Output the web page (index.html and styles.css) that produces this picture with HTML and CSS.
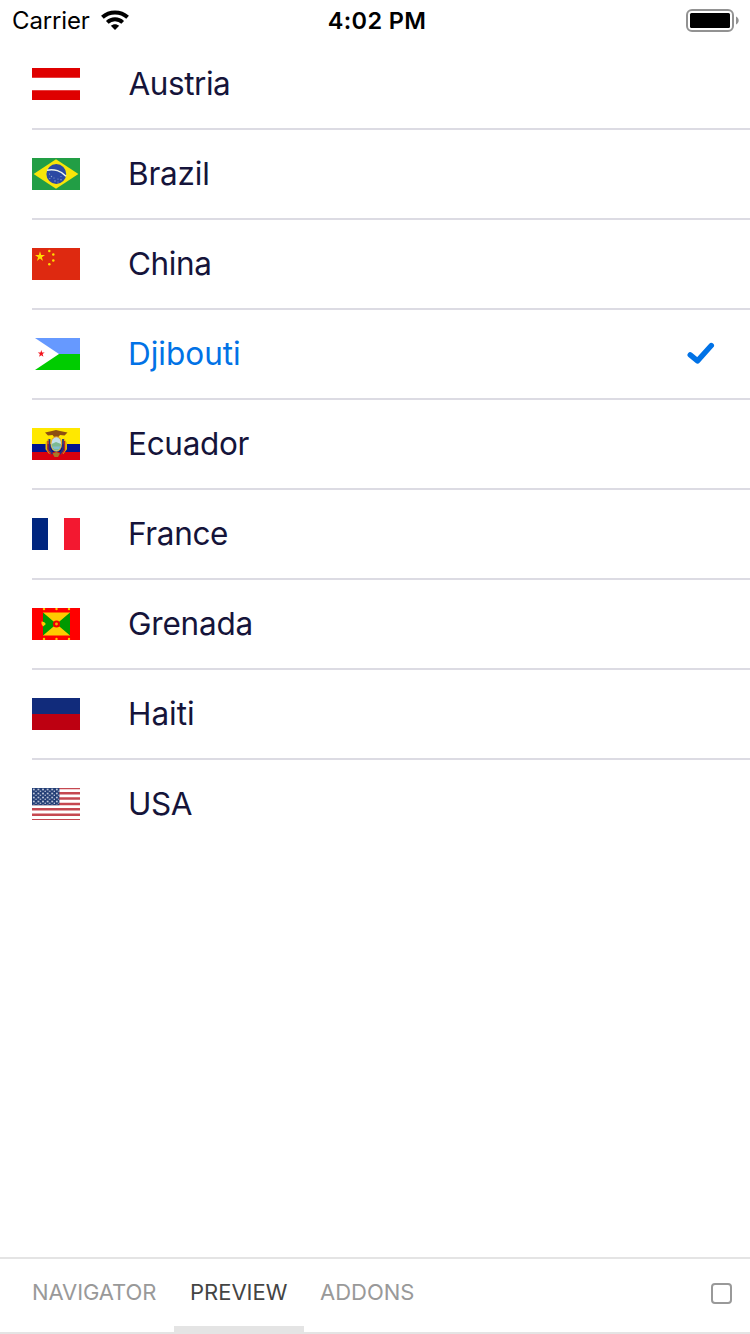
FILE: index.html
```html
<!DOCTYPE html>
<html lang="en">
<head>
<meta charset="utf-8">
<title>Countries</title>
<link rel="stylesheet" href="styles.css">
</head>
<body>
<div class="screen">
  <header class="status">
    <div class="status-left">
      <span class="carrier">Carrier</span>
      <svg class="wifi" width="28" height="20" viewBox="0 0 28 20">
        <path d="M1.400 7.200C8.500.8 19.500.8 26.600 7.200" fill="none" stroke="#000" stroke-width="4"/>
        <path d="M6.300 12.300C10.600 8.200 17.400 8.200 21.700 12.300" fill="none" stroke="#000" stroke-width="3.900"/>
        <path d="M14 20L9.800 15.800C12.200 13.600 15.800 13.600 18.200 15.800Z"/>
      </svg>
    </div>
    <span class="time">4:02 PM</span>
    <div class="status-right">
      <svg class="battery" width="54" height="24" viewBox="0 0 54 24">
        <rect x="1" y="1" width="46" height="21" rx="5" fill="#fff" stroke="#929292" stroke-width="2"/>
        <rect x="4" y="4" width="40" height="15" rx="1.500"/>
        <path d="M50 7.500C53.600 9 53.600 14 50 15.500Z" fill="#929292"/>
      </svg>
    </div>
  </header>

  <ul class="list">
    <li class="row">
      <svg class="flag" viewBox="0 0 48 32"><path fill="#fff" d="M0 0H48V32H0Z"/><path fill="#df0000" d="M0 0H48V9.700H0ZM0 22.300H48V32H0Z"/></svg>
      <div class="cell"><span class="name austria">Austria</span></div>
    </li>
    <li class="row">
      <svg class="flag" viewBox="0 0 48 32"><path fill="#229e45" d="M0 0H48V32H0Z"/><path fill="#f8e509" d="M1.600 16L24 1.300L46.400 16L24 30.700Z"/><circle cx="24.300" cy="16" r="9.900" fill="#2b49a3"/><path d="M15 12.200C22 10.600 29.500 13 34 18.200" fill="none" stroke="#eff5e8" stroke-width="1.500"/><g fill="#8fa5cc"><circle cx="17.500" cy="16" r=".6"/><circle cx="19.500" cy="18.500" r=".7"/><circle cx="17.800" cy="20.500" r=".6"/><circle cx="22" cy="20" r=".6"/><circle cx="23" cy="23" r=".7"/><circle cx="26" cy="21" r=".6"/><circle cx="29" cy="21.800" r=".7"/><circle cx="26" cy="24" r=".5"/><circle cx="29" cy="18.500" r=".5"/></g></svg>
      <div class="cell"><span class="name brazil">Brazil</span></div>
    </li>
    <li class="row">
      <svg class="flag" viewBox="0 0 48 32"><path fill="#de2910" d="M0 0H48V32H0Z"/><g fill="#ffde00"><path d="M8 3.200L9.200 6.900H13L9.900 9.200L11 12.900L8 10.600L4.900 12.900L6.100 9.200L3 6.900H6.800Z"/><circle cx="17.300" cy="3" r="1.250"/><circle cx="21.300" cy="6.500" r="1.250"/><circle cx="21.300" cy="12.500" r="1.250"/><circle cx="17.300" cy="16.200" r="1.250"/></g></svg>
      <div class="cell"><span class="name china">China</span></div>
    </li>
    <li class="row selected">
      <svg class="flag" viewBox="0 0 48 32"><path fill="#fff" d="M0 0H48V32H0Z"/><path fill="#6699ff" d="M3 0H48V16H27Z"/><path fill="#00cc00" d="M27 16H48V32H3Z"/><path fill="#f2121c" d="M9.300 12L10.100 14.500H12.700L10.600 16.100L11.400 18.800L9.300 17.200L7.100 18.800L7.900 16.100L5.800 14.500H8.500Z"/></svg>
      <div class="cell"><span class="name djibouti">Djibouti</span>
        <svg class="check" width="28" height="24" viewBox="0 0 28 24"><path d="M3.200 12.900L10.500 18.900L24.300 3.500" fill="none" stroke="#0172e6" stroke-width="5.400" stroke-linecap="round" stroke-linejoin="round"/></svg>
      </div>
    </li>
    <li class="row">
      <svg class="flag" viewBox="0 0 48 32">
        <path fill="#ffe800" d="M0 0H48V16H0Z"/><path fill="#00148e" d="M0 16H48V24H0Z"/><path fill="#d8000e" d="M0 24H48V32H0Z"/>
        <path d="M17 11L14.500 15V21L18 25.500M31.500 11L34 15V21L30.500 25.500" fill="none" stroke="#e6b800" stroke-width="2"/>
        <path d="M17.500 11V21L20.500 26M31 11V21L28 26" fill="none" stroke="#26337c" stroke-width="1.800"/>
        <path d="M16 13V22L19 26.500M32.500 13V22L29.500 26.500" fill="none" stroke="#b9202a" stroke-width="1.300"/>
        <path d="M13 4.500L20 3L24 2L28 3L35.500 4.500L32.500 7.500L28 7L26 9.500H22.500L20.500 7L16 7.500Z" fill="#8c4f12"/>
        <ellipse cx="24.300" cy="16" rx="5.800" ry="7.800" fill="#e0a32d"/>
        <ellipse cx="24.300" cy="16" rx="4.900" ry="6.700" fill="#c3e0ea"/>
        <path d="M19.700 16L24 14L29 16C29 20 27 22.600 24.300 22.600S19.700 20 19.700 16Z" fill="#7cba91"/>
        <path d="M20.300 18.500H28.200L27 21H22Z" fill="#82bfd0"/>
        <path d="M20.500 25.500L24.300 24L28 25.500L26 29H22.500Z" fill="#a77827"/>
      </svg>
      <div class="cell"><span class="name ecuador">Ecuador</span></div>
    </li>
    <li class="row">
      <svg class="flag" viewBox="0 0 48 32"><path fill="#fff" d="M0 0H48V32H0Z"/><path fill="#00267f" d="M0 0H16V32H0Z"/><path fill="#f31830" d="M32 0H48V32H32Z"/></svg>
      <div class="cell"><span class="name france">France</span></div>
    </li>
    <li class="row">
      <svg class="flag" viewBox="0 0 48 32"><path fill="#ff0000" d="M0 0H48V32H0Z"/><path fill="#ffcc00" d="M11 4.500H38V27.500H11Z"/><path fill="#009900" d="M11 4.500L24.500 16L11 27.500ZM38 4.500L24.500 16L38 27.500Z"/><circle cx="24.500" cy="16" r="3.600" fill="#f00000"/><circle cx="24.500" cy="16" r="1.400" fill="#f2b300"/><path d="M9.500 13.500C11 13.500 14 14.500 13.500 16.500L11 18.500L9.500 16Z" fill="#ffcc00"/><g fill="#ffcc00"><circle cx="12" cy="1" r="1.200"/><circle cx="24.500" cy="1" r="1.200"/><circle cx="37" cy="1" r="1.200"/><circle cx="12" cy="31" r="1.200"/><circle cx="24.500" cy="31" r="1.200"/><circle cx="37" cy="31" r="1.200"/></g></svg>
      <div class="cell"><span class="name grenada">Grenada</span></div>
    </li>
    <li class="row">
      <svg class="flag" viewBox="0 0 48 32"><path fill="#112b7b" d="M0 0H48V16H0Z"/><path fill="#bd0011" d="M0 16H48V32H0Z"/></svg>
      <div class="cell"><span class="name haiti">Haiti</span></div>
    </li>
    <li class="row">
      <svg class="flag" viewBox="0 0 48 32">
        <defs><pattern id="stars" width="4.600" height="4" patternUnits="userSpaceOnUse"><circle cx="1.800" cy="1.500" r=".95" fill="#c4cbdc"/><circle cx="4" cy="3.300" r=".75" fill="#c4cbdc"/></pattern></defs>
        <path fill="#fff" d="M0 0H48V32H0Z"/>
        <path fill="#c54851" d="M0 0H48V1.300H0ZM0 4H48V6.500H0ZM0 9.300H48V11.700H0ZM0 14.700H48V17.200H0ZM0 20H48V22.500H0ZM0 25.400H48V27.900H0ZM0 31H48V32H0Z"/>
        <path fill="#233e75" d="M0 0H27.400V17.200H0Z"/><path fill="url(#stars)" d="M0 0H27V17H0Z"/>
      </svg>
      <div class="cell"><span class="name usa">USA</span></div>
    </li>
  </ul>

  <nav class="tabs">
    <div class="tab"><span class="label navigator">NAVIGATOR</span></div>
    <div class="tab active"><span class="label preview">PREVIEW</span></div>
    <div class="tab"><span class="label addons">ADDONS</span></div>
    <span class="square"></span>
  </nav>
</div>
</body>
</html>
```
FILE: styles.css
```css
* { box-sizing: border-box; }
body {
  margin: 0;
  background: #fff;
  font-family: Inter, "Liberation Sans", sans-serif;
}
.screen {
  display: flex;
  flex-direction: column;
  width: 750px;
  height: 1334px;
  overflow: hidden;
}
.status {
  display: grid;
  grid-template-columns: 1fr auto 1fr;
  height: 40px;
  padding: 0 10px 0 12px;
  color: #000;
  font-size: 24px;
  line-height: 42px;
}
.status-left { display: flex; }
.carrier { width: 89px; font-weight: 375; letter-spacing: -0.15px; }
.wifi { margin-top: 10px; }
.time { padding-left: 2px; font-size: 23.5px; font-weight: 600; letter-spacing: 0.35px; }
.status-right { display: flex; justify-content: flex-end; }
.battery { margin-top: 9px; }
.list { flex: 1; margin: 0; padding: 0; list-style: none; }
.row {
  display: flex;
  height: 90px;
  margin-left: 32px;
  border-bottom: 2px solid #dcdbe3;
  color: #15143a;
}
.row:last-child { border-bottom-color: transparent; }
.flag { flex: none; width: 48px; height: 32px; margin-top: 28px; }
.cell {
  display: flex;
  flex: 1;
  align-items: center;
  justify-content: space-between;
  margin-left: 48px;
  padding-right: 35px;
}
.name {
  font-size: 31.5px;
  font-weight: 375;
  line-height: 44px;
  white-space: nowrap;
}
.austria { padding-left: 0.5px; letter-spacing: -0.45px; }
.brazil { letter-spacing: -0.2px; }
.china { letter-spacing: -0.4px; }
.ecuador { letter-spacing: -0.3px; }
.france { letter-spacing: -0.35px; }
.grenada { letter-spacing: -0.2px; }
.usa { letter-spacing: -0.4px; }
.selected .name { color: #0172e6; }
.tabs {
  display: flex;
  height: 77px;
  padding-left: 16px;
  border-top: 2px solid #e4e4e4;
  border-bottom: 2px solid #e4e4e4;
}
.tab {
  height: 73px;
  padding: 0 16px;
  color: #999;
  font-size: 22px;
  font-weight: 375;
  line-height: 67px;
}
.tab:nth-child(1) { width: 158px; }
.tab:nth-child(2) { width: 130px; }
.active { border-bottom: 6px solid #e4e4e4; color: #444; }
.label { white-space: nowrap; }
.navigator { letter-spacing: -0.08px; }
.square {
  width: 21px;
  height: 21px;
  margin: 24px 18px 0 auto;
  border: 2px solid #999;
  border-radius: 4px;
}
```
